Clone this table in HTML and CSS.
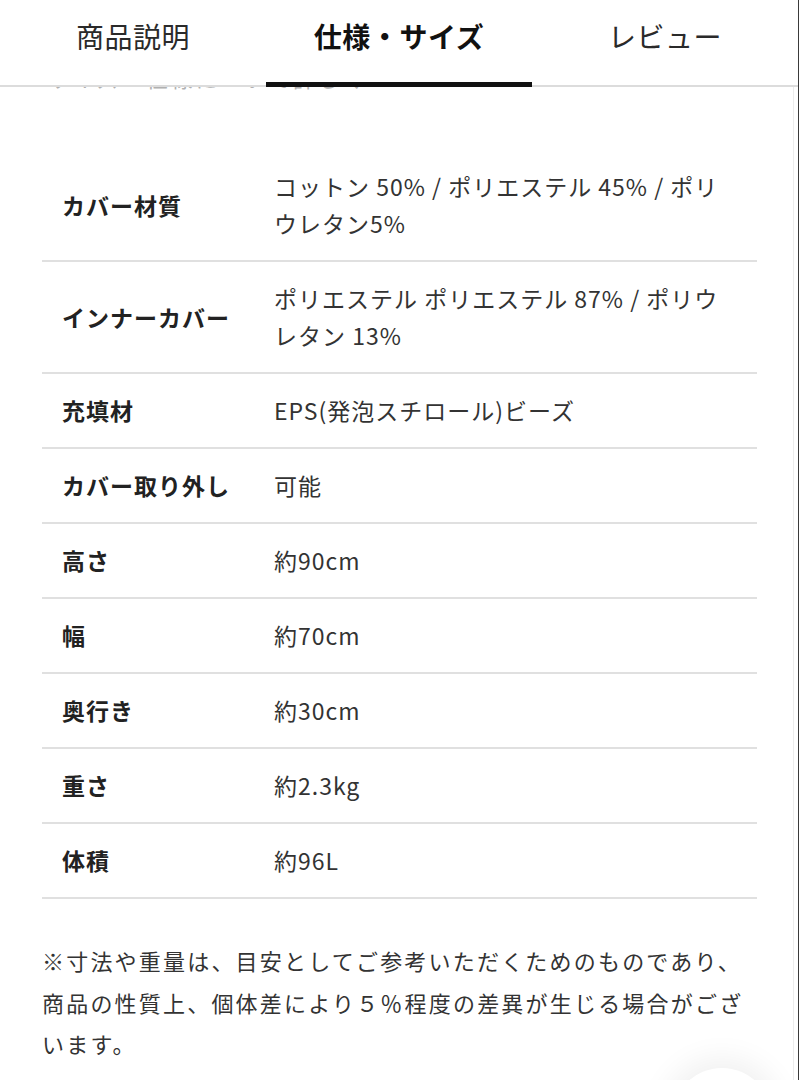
FILE: index.html
```html
<!DOCTYPE html>
<html lang="ja">
<head>
<meta charset="utf-8">
<title>仕様・サイズ</title>
<link rel="stylesheet" href="styles.css">
</head>
<body>
<div class="frame">
  <div class="page">
    <nav class="tabs">
      <div class="tab">商品説明</div>
      <div class="tab active">仕様・サイズ</div>
      <div class="tab">レビュー</div>
    </nav>
    <div class="peek"><div class="peek-text">サイズ・仕様について詳しく</div></div>
    <section class="specs">
      <div class="row"><div class="label">カバー材質</div><div class="value">コットン 50% / ポリエステル 45% / ポリウレタン5%</div></div>
      <div class="row"><div class="label">インナーカバー</div><div class="value">ポリエステル ポリエステル 87% / ポリウレタン 13%</div></div>
      <div class="row"><div class="label">充填材</div><div class="value">EPS(発泡スチロール)ビーズ</div></div>
      <div class="row"><div class="label">カバー取り外し</div><div class="value">可能</div></div>
      <div class="row"><div class="label">高さ</div><div class="value">約90cm</div></div>
      <div class="row"><div class="label">幅</div><div class="value">約70cm</div></div>
      <div class="row"><div class="label">奥行き</div><div class="value">約30cm</div></div>
      <div class="row"><div class="label">重さ</div><div class="value">約2.3kg</div></div>
      <div class="row"><div class="label">体積</div><div class="value">約96L</div></div>
    </section>
    <p class="note">※寸法や重量は、目安としてご参考いただくためのものであり、商品の性質上、個体差により５％程度の差異が生じる場合がございます。</p>
  </div>
  <div class="fab"></div>
</div>
</body>
</html>
```

FILE: styles.css
```css
* { box-sizing: border-box; }
html, body {
  margin: 0;
  padding: 0;
  background: #fff;
}
body {
  font-family: "Noto Sans CJK JP", "Noto Sans", sans-serif;
  color: #333;
}
.frame {
  position: relative;
  width: 799px;
  height: 1080px;
  overflow: hidden;
  border-right: 1px solid #3a3a3a;
}
.page {
  width: 794px;
  height: 1080px;
  border-right: 1px solid #ececec;
}
.tabs {
  display: flex;
  height: 87px;
  border-bottom: 2px solid #dcdcdc;
  width: 798px;
  background: #fff;
}
.tab {
  position: relative;
  flex: 1 1 0;
  display: flex;
  align-items: center;
  justify-content: center;
  padding-bottom: 14px;
  font-size: 28px;
  color: #2a2a2a;
  letter-spacing: 0.02em;
}
.tab.active {
  font-weight: 700;
  color: #111;
}
.tab.active::after {
  content: "";
  position: absolute;
  left: 0;
  right: 0;
  bottom: -2px;
  height: 5px;
  background: #111;
}
.peek {
  height: 5px;
  overflow: hidden;
  padding-left: 48px;
}
.peek-text {
  margin-top: -25px;
  font-size: 22px;
  line-height: 30px;
  color: #b0b0b0;
  letter-spacing: 0.12em;
}
.specs {
  margin: 58px 36px 0 42px;
}
.row {
  display: flex;
  align-items: center;
  padding: 18px 20px;
  border-bottom: 2px solid #e0e0e0;
}
.label {
  flex: 0 0 214px;
  font-size: 23px;
  line-height: 37px;
  font-weight: 700;
  letter-spacing: 1px;
  color: #222;
}
.value {
  flex: 1 1 auto;
  font-size: 23px;
  line-height: 37px;
  letter-spacing: 1px;
  color: #333;
  margin-left: -2px;
}
.note {
  margin: 41px 36px 0 42px;
  font-size: 22px;
  line-height: 41.5px;
  letter-spacing: 0.1em;
  color: #333;
}
.fab {
  position: absolute;
  left: 672px;
  top: 1068px;
  width: 100px;
  height: 100px;
  border-radius: 50%;
  background: #fff;
  box-shadow: 0 0 30px 10px rgba(0, 0, 0, 0.06);
}
```
